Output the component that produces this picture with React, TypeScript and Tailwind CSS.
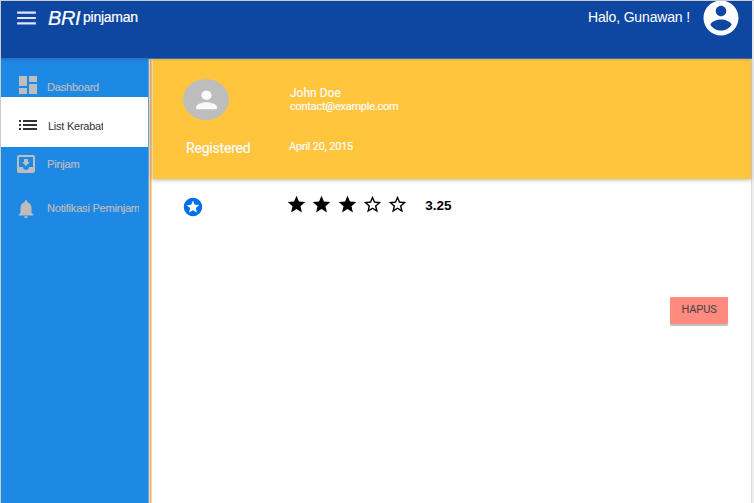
import React from "react";

const paths = {
  menu: "M3 18h18v-2H3v2zm0-5h18v-2H3v2zm0-7v2h18V6H3z",
  dashboard: "M3 13h8V3H3v10zm0 8h8v-6H3v6zm10 0h8V11h-8v10zm0-18v6h8V3h-8z",
  list: "M3 13h2v-2H3v2zm0 4h2v-2H3v2zm0-8h2V7H3v2zm4 4h14v-2H7v2zm0 4h14v-2H7v2zM7 7v2h14V7H7z",
  inbox:
    "M19 3H4.99c-1.11 0-1.98.9-1.98 2L3 19c0 1.1.88 2 1.99 2H19c1.1 0 2-.9 2-2V5c0-1.1-.9-2-2-2zm0 12h-4c0 1.66-1.35 3-3 3s-3-1.34-3-3H4.99V5H19v10zm-3-5h-2V7h-4v3H8l4 4 4-4z",
  bell: "M12 22c1.1 0 2-.9 2-2h-4c0 1.1.89 2 2 2zm6-6v-5c0-3.07-1.64-5.64-4.5-6.32V4c0-.83-.67-1.5-1.5-1.5s-1.5.67-1.5 1.5v.68C7.63 5.36 6 7.92 6 11v5l-2 2v1h16v-1l-2-2z",
  account:
    "M12 2C6.48 2 2 6.48 2 12s4.48 10 10 10 10-4.48 10-10S17.52 2 12 2zm0 3c1.66 0 3 1.34 3 3s-1.34 3-3 3-3-1.34-3-3 1.34-3 3-3zm0 14.2c-2.5 0-4.71-1.28-6-3.22.03-1.99 4-3.08 6-3.08 1.99 0 5.97 1.09 6 3.08-1.29 1.94-3.5 3.22-6 3.22z",
  person:
    "M12 12c2.21 0 4-1.79 4-4s-1.79-4-4-4-4 1.79-4 4 1.79 4 4 4zm0 2c-2.67 0-8 1.34-8 4v2h16v-2c0-2.66-5.33-4-8-4z",
  badge:
    "M11.99 2C6.47 2 2 6.48 2 12s4.47 10 9.99 10C17.52 22 22 17.52 22 12S17.52 2 11.99 2zm4.24 16L12 15.45 7.77 18l1.12-4.81-3.73-3.23 4.92-.42L12 5l1.92 4.53 4.92.42-3.73 3.23L16.23 18z",
  star: "M12 17.27L18.18 21l-1.64-7.03L22 9.24l-7.19-.61L12 2 9.19 8.63 2 9.24l5.46 4.73L5.82 21z",
  starOutline:
    "M22 9.24l-7.19-.62L12 2 9.19 8.63 2 9.24l5.46 4.73L5.82 21 12 17.27 18.18 21l-1.63-7.03L22 9.24zM12 15.4l-3.76 2.27 1-4.28-3.32-2.88 4.38-.38L12 6.1l1.71 4.04 4.38.38-3.32 2.88 1 4.28L12 15.4z",
};

function Icon({ name, className }: { name: keyof typeof paths; className: string }) {
  return (
    <svg viewBox="0 0 24 24" preserveAspectRatio="none" fill="currentColor" className={`shrink-0 ${className}`}>
      <path d={paths[name]} />
    </svg>
  );
}

function Header() {
  return (
    <header className="z-10 flex h-[58px] items-start justify-between border-b border-[#3a6cb8] bg-[#0d47a1] text-white shadow-[0_1px_2px_rgba(0,0,0,0.12)]">
      <div className="flex pl-[13px]">
        <Icon name="menu" className="mt-[4px] h-[26px] w-[25px] text-[#e4e6f4]" />
        <span className="ml-[9px] mt-[5px] w-[35px] text-[20px] italic leading-[24px] tracking-[-0.4px] [-webkit-text-stroke:0.2px]">BRI</span>
        <span className="mt-[6px] text-[14px] leading-[20px] tracking-[-0.25px] [-webkit-text-stroke:0.2px]">pinjaman</span>
      </div>
      <div className="flex pr-[10px]">
        <span className="mt-[6px] text-[14px] leading-[20px] tracking-[-0.15px]">Halo, Gunawan !</span>
        <Icon name="account" className="ml-[10px] -mt-[4px] h-[42px] w-[42px]" />
      </div>
    </header>
  );
}

function Sidebar() {
  return (
    <nav className="flex w-[148px] shrink-0 flex-col border-r border-[#5ca9ee] bg-[#1e88e5] text-[11px] leading-[14px] tracking-[-0.2px] text-[#bdbdbd]">
      <a className="flex h-[38px] pl-[15px] pt-[14px]">
        <Icon name="dashboard" className="h-[24px] w-[24px]" />
        <span className="ml-[7px] mt-[7px] [-webkit-text-stroke:0.2px]">Dashboard</span>
      </a>
      <a className="flex h-[50px] bg-white pl-[15px] pt-[16px] text-[#333]">
        <Icon name="list" className="h-[24px] w-[24px]" />
        <span className="ml-[8px] mt-[6px] w-[55px] overflow-hidden whitespace-nowrap tracking-[-0.25px]">List Kerabat</span>
      </a>
      <a className="flex h-[44px] pl-[13px] pt-[5px]">
        <Icon name="inbox" className="h-[24px] w-[24px]" />
        <span className="ml-[9px] mt-[5px] [-webkit-text-stroke:0.2px]">Pinjam</span>
      </a>
      <a className="flex h-[44px] pl-[14px] pt-[7px]">
        <Icon name="bell" className="h-[22px] w-[22px]" />
        <span className="ml-[10px] mt-[3px] w-[92px] overflow-hidden whitespace-nowrap tracking-[-0.2px] [-webkit-text-stroke:0.2px]">
          Notifikasi Peminjaman
        </span>
      </a>
    </nav>
  );
}

function Profile() {
  return (
    <section className="flex h-[120px] border-l border-[#f3d3a0] bg-[#ffc63d] pl-[30px] font-['Roboto',sans-serif] text-[#fafafa] shadow-[0_1px_4px_rgba(0,0,0,0.3)] [-webkit-text-stroke:0.2px]">
      <div className="w-[106px] pt-[20px]">
        <div className="flex h-[41px] w-[46px] items-center justify-center rounded-[50%] bg-[#bdbdbd]">
          <Icon name="person" className="mt-[1px] h-[28px] w-[31px]" />
        </div>
        <p className="ml-[3px] mt-[20px] text-[14px] leading-[16px] tracking-[-0.2px]">Registered</p>
      </div>
      <div className="pt-[27px]">
        <p className="ml-px text-[12px] leading-[14px]">John Doe</p>
        <p className="ml-px text-[11px] leading-[13px] tracking-[-0.25px]">contact@example.com</p>
        <p className="mt-[27px] text-[11px] leading-[13px] tracking-[-0.22px]">April 20, 2015</p>
      </div>
    </section>
  );
}

function Rating() {
  return (
    <div className="flex pl-[30px] pt-[15px]">
      <Icon name="badge" className="mt-[2px] h-[22px] w-[22px] text-[#0070ea]" />
      <div className="ml-[82px] flex gap-[4.3px] text-black">
        <Icon name="star" className="h-[21px] w-[21px]" />
        <Icon name="star" className="h-[21px] w-[21px]" />
        <Icon name="star" className="h-[21px] w-[21px]" />
        <Icon name="starOutline" className="h-[21px] w-[21px]" />
        <Icon name="starOutline" className="h-[21px] w-[21px]" />
      </div>
      <span className="ml-[17px] mt-[4px] text-[13.5px] font-bold leading-[16px] text-black">3.25</span>
    </div>
  );
}

export default function App() {
  return (
    <div className="flex h-[503px] w-[754px] overflow-hidden border-l border-t border-[#ccc] bg-[#eee] font-['Liberation_Sans',Arial,sans-serif]">
      <div className="flex w-[751px] flex-col">
        <Header />
        <div className="flex grow">
          <Sidebar />
          <div className="w-[3px] shrink-0 border-x border-[#f1d6b4] bg-[#ffb04f]" />
          <main className="flex grow flex-col border-r border-[#ddd] bg-white">
            <Profile />
            <Rating />
            <button className="mr-[23px] mt-[79px] h-[27px] w-[58px] self-end rounded-[1px] bg-[#ff8a80] pb-[2px] font-['Roboto',sans-serif] text-[11px] leading-[14px] tracking-[-0.1px] text-[#444] shadow-[0_2px_1px_rgba(0,0,0,0.25)]">
              HAPUS
            </button>
          </main>
        </div>
      </div>
    </div>
  );
}
